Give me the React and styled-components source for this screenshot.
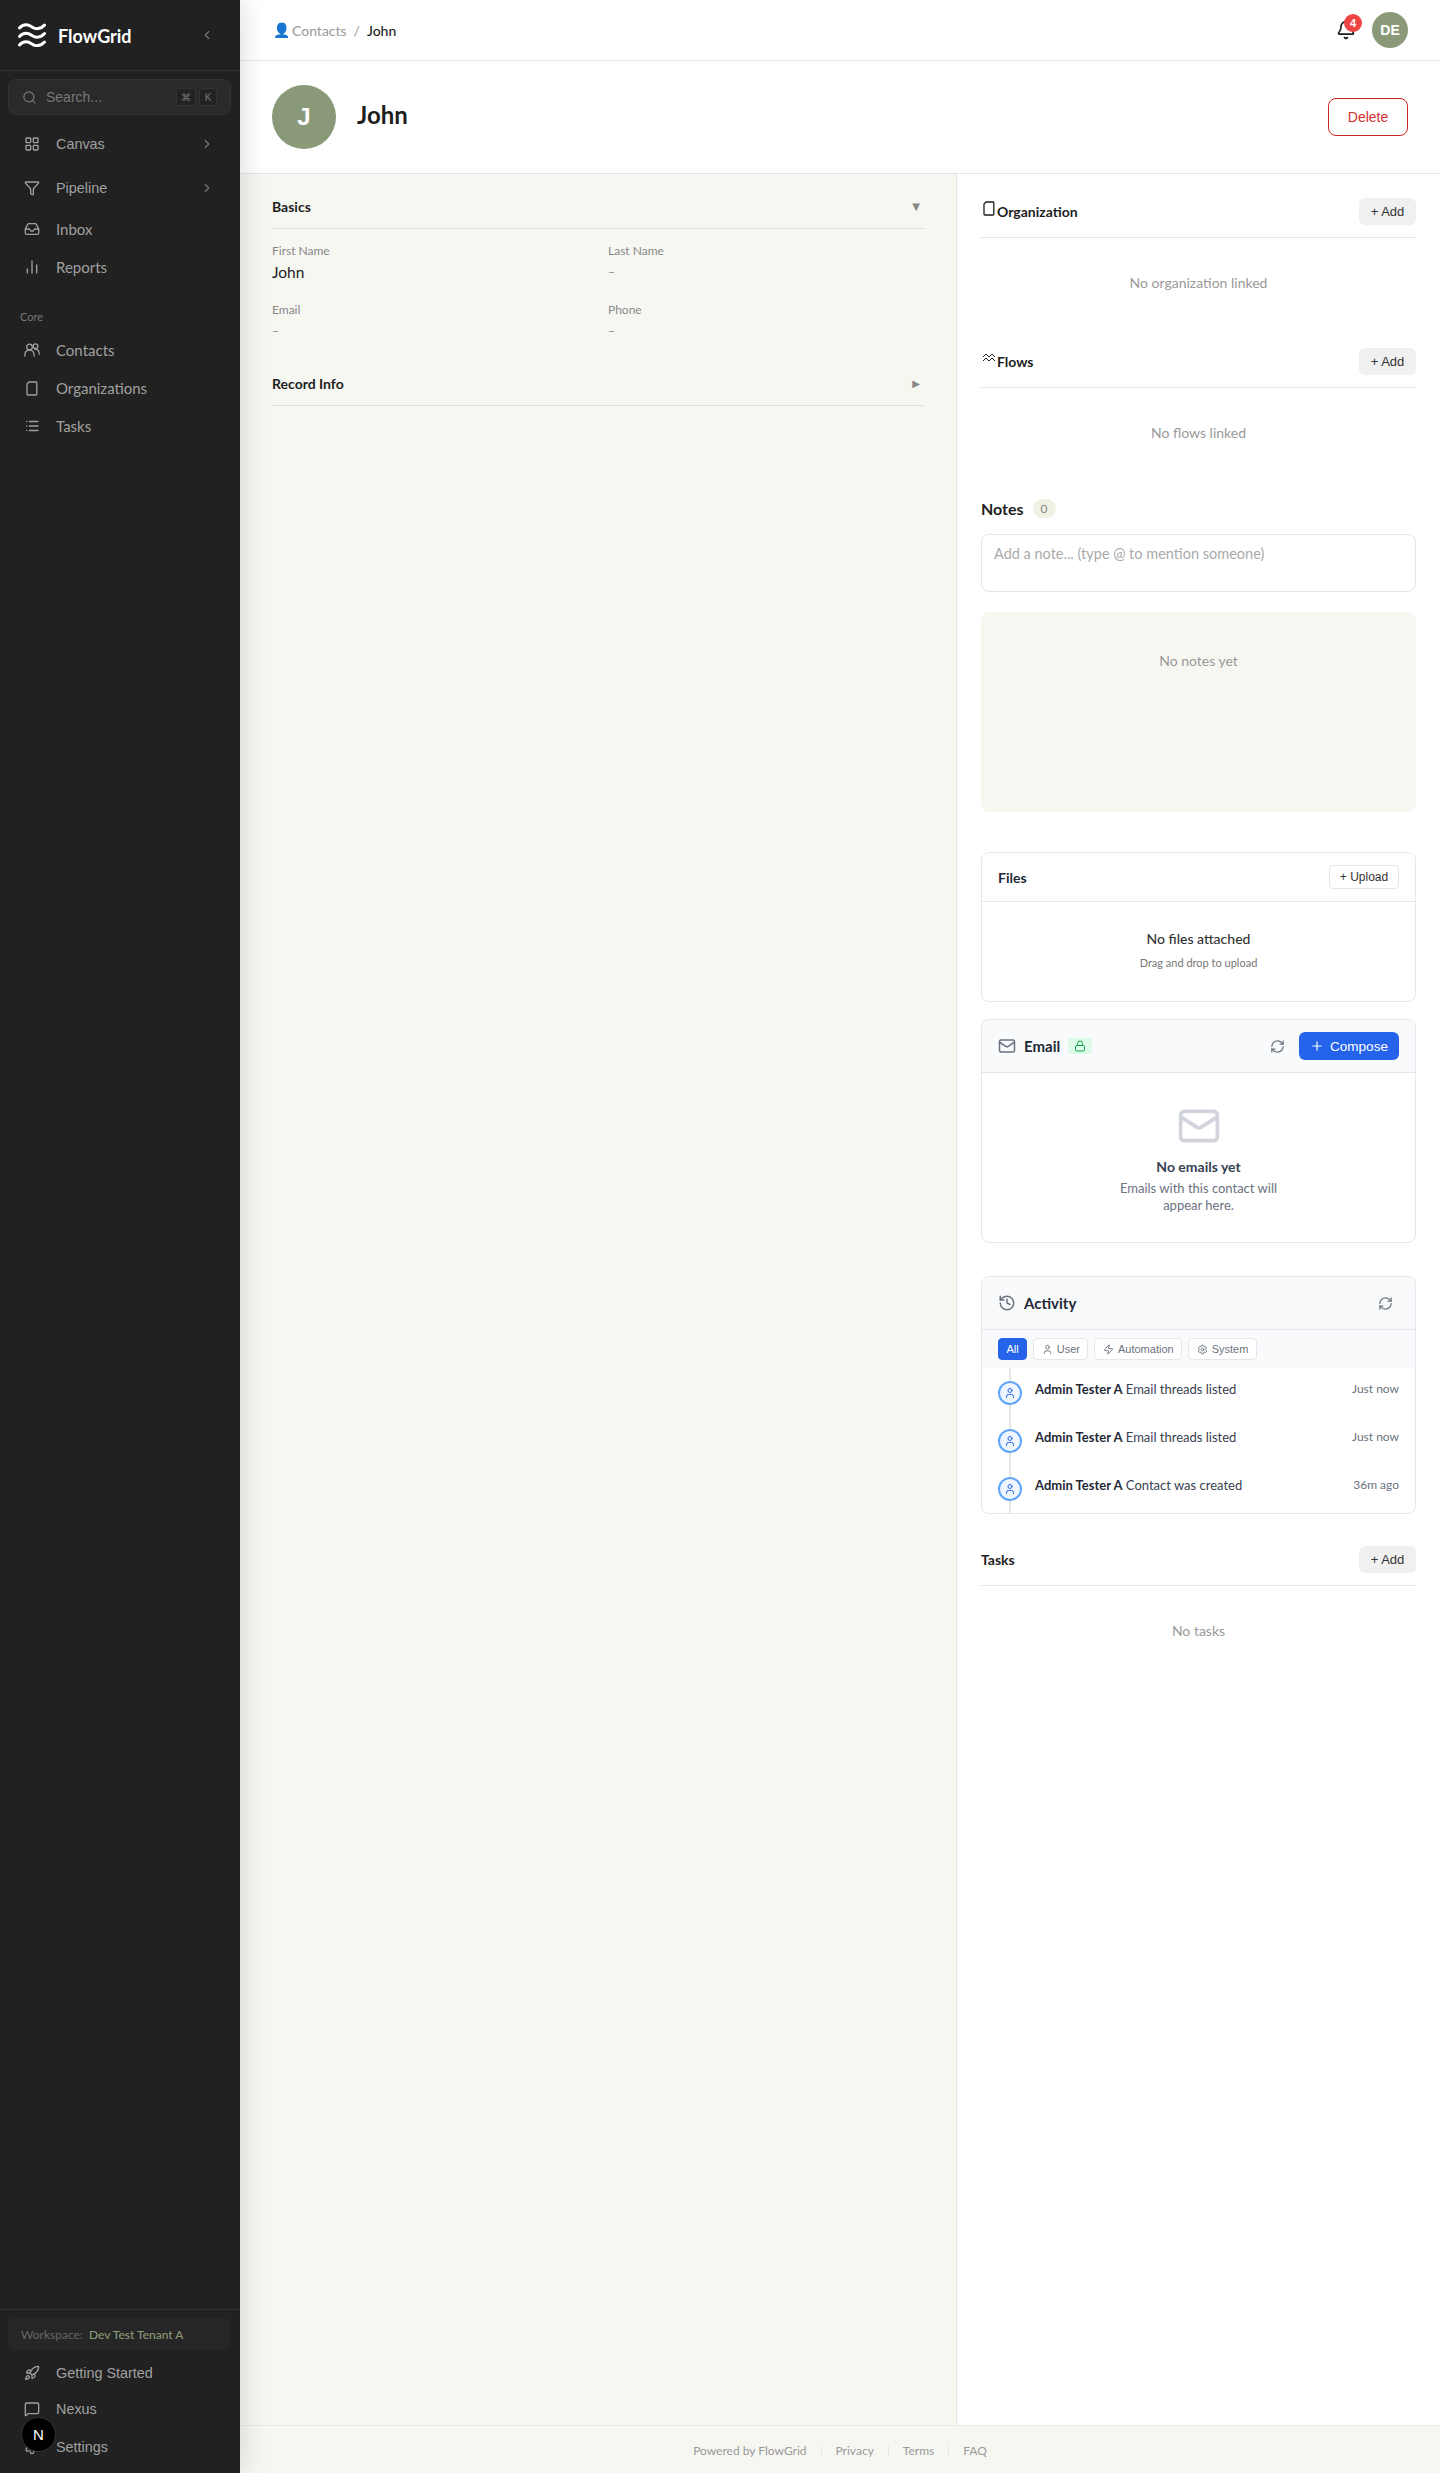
import React from "react";
import styled, { createGlobalStyle } from "styled-components";
import {
  Bell,
  ChartNoAxesColumn,
  ChevronLeft,
  ChevronRight,
  Filter,
  History,
  Inbox,
  LayoutGrid,
  Lock,
  Mail,
  MessageSquare,
  Plus,
  RefreshCw,
  Rocket,
  Search,
  Settings,
  User,
  Zap,
} from "lucide-react";

const FONT = `Lato, "Open Sans", sans-serif`;
const ARIAL = `"Liberation Sans", Arial, sans-serif`;

const GlobalStyle = createGlobalStyle`
  html, body { margin: 0; padding: 0; }
  * { box-sizing: border-box; }
  body { font-family: ${FONT}; background: #f7f7f2; color: #1e1e1e; }
`;

const Shell = styled.div`
  display: flex;
  min-height: 100vh;
`;

/* sidebar */
const Sidebar = styled.aside`
  width: 240px;
  flex-shrink: 0;
  background: #212121;
  display: flex;
  flex-direction: column;
  box-shadow: 4px 0 24px rgba(0, 0, 0, 0.12);
  z-index: 2;
`;

const Brand = styled.div`
  height: 71px;
  padding: 0 26px 0 18px;
  display: flex;
  align-items: center;
  gap: 12px;
  border-bottom: 1px solid #333;
  color: #fff;
`;

const BrandName = styled.span`
  font-size: 18px;
  font-weight: 700;
  flex: 1;
  margin-top: 1px;
`;

const SearchBox = styled.div`
  margin: 8px 9px 0 8px;
  height: 36px;
  border-radius: 8px;
  background: #2a2a2a;
  border: 1px solid #333;
  display: flex;
  align-items: center;
  padding: 0 13px;
  gap: 9px;
  color: #777;
  font: 14px ${ARIAL};
`;

const SearchText = styled.span`
  flex: 1;
`;

const Kbd = styled.span`
  width: ${(p) => p.$w || 20}px;
  height: 18px;
  margin-left: -6px;
  border-radius: 3px;
  background: #222;
  border: 1px solid #333;
  font: 10px ${ARIAL};
  color: #777;
  display: flex;
  align-items: center;
  justify-content: center;
`;

const NavList = styled.nav`
  display: flex;
  flex-direction: column;
  padding-top: ${(p) => p.$top || 0}px;
`;

const NavItem = styled.div`
  height: ${(p) => p.$h || 38}px;
  display: flex;
  align-items: center;
  padding: 0 26px 0 24px;
  gap: 16px;
  color: #a0a0a0;
  font-family: ${(p) => (p.$arial ? ARIAL : FONT)};
  font-size: ${(p) => (p.$arial ? 14.4 : 15)}px;
  svg { flex-shrink: 0; }
`;

const NavLabel = styled.span`
  flex: 1;
`;

const SectionLabel = styled.div`
  margin: 24px 0 7px 20px;
  font-size: 11px;
  line-height: 14px;
  color: #777;
`;

const SideBottom = styled.div`
  margin-top: auto;
  border-top: 1px solid #333;
  padding-bottom: 6px;
`;

const Workspace = styled.div`
  margin: 8px 9px 0 8px;
  height: 32px;
  border-radius: 6px;
  background: #262626;
  padding: 0 13px;
  display: flex;
  align-items: center;
  gap: 6px;
  font-size: 12px;
  color: #666;
`;

const WorkspaceName = styled.span`
  color: #8a9a78;
  font-weight: 500;
`;

const DevBadge = styled.div`
  position: fixed;
  left: 21px;
  bottom: 21px;
  width: 35px;
  height: 35px;
  border-radius: 50%;
  background: #000;
  border: 1px solid #333;
  color: #fff;
  display: flex;
  align-items: center;
  justify-content: center;
  font: 15px ${ARIAL};
  z-index: 5;
`;

/* main */
const Main = styled.div`
  flex: 1;
  min-width: 0;
  display: flex;
  flex-direction: column;
`;

const TopBar = styled.header`
  height: 61px;
  background: #fff;
  border-bottom: 1px solid #e5e5e5;
  display: flex;
  align-items: center;
  padding: 0 32px;
`;

const Crumbs = styled.div`
  flex: 1;
  display: flex;
  align-items: center;
  gap: 7px;
  font-size: 14px;
  color: #999;
`;

const CrumbIcon = styled.span`
  font-family: "DejaVu Sans", sans-serif;
  color: #8ab8e8;
  font-size: 14px;
  margin: 0 -5px 0 1px;
`;

const CrumbCurrent = styled.span`
  color: #1e1e1e;
  font-weight: 500;
`;

const BellWrap = styled.div`
  position: relative;
  width: 20px;
  height: 20px;
  margin-right: 16px;
  color: #1e1e1e;
`;

const BellBadge = styled.span`
  position: absolute;
  top: -6px;
  right: -6px;
  width: 18px;
  height: 18px;
  border-radius: 50%;
  background: #ef4444;
  color: #fff;
  font: 700 11px ${ARIAL};
  display: flex;
  align-items: center;
  justify-content: center;
`;

const Avatar = styled.div`
  width: ${(p) => p.$size}px;
  height: ${(p) => p.$size}px;
  border-radius: 50%;
  background: #8a9a78;
  color: #fff;
  display: flex;
  align-items: center;
  justify-content: center;
  font-family: ${ARIAL};
  font-weight: 700;
  font-size: ${(p) => p.$fs}px;
  flex-shrink: 0;
`;

const ProfileHead = styled.div`
  height: 113px;
  background: #fff;
  border-bottom: 1px solid #e5e5e5;
  display: flex;
  align-items: center;
  padding: 0 32px;
  gap: 21px;
`;

const ProfileName = styled.h1`
  margin: 0 0 6px;
  flex: 1;
  font-size: 24px;
  font-weight: 700;
  color: #1e1e1e;
`;

const DeleteButton = styled.button`
  width: 80px;
  height: 38px;
  background: #fff;
  border: 1px solid #c62828;
  border-radius: 8px;
  color: #d32f2f;
  font: 14px ${ARIAL};
`;

const Body = styled.div`
  flex: 1;
  display: flex;
`;

const LeftCol = styled.section`
  flex: 1;
  min-width: 0;
  padding: 20px 32px 0 32px;
`;

const RightCol = styled.section`
  width: 484px;
  flex-shrink: 0;
  background: #fff;
  border-left: 1px solid #e5e5e5;
  padding: 24px 24px 32px 24px;
`;

const Accordion = styled.div`
  height: 35px;
  display: flex;
  align-items: center;
  justify-content: space-between;
  padding: 0 4px 10px 0;
  border-bottom: 1px solid #e0e0dc;
  font-size: 14px;
  font-weight: 700;
  color: #1e1e1e;
`;

const Caret = styled.span`
  font: 10px "DejaVu Sans", sans-serif;
  color: #888;
`;

const FieldGrid = styled.div`
  display: grid;
  grid-template-columns: 1fr 1fr;
  column-gap: 20px;
  row-gap: 20px;
  padding: 14px 0 30px;
`;

const FieldLabel = styled.div`
  font-size: 12px;
  line-height: 16px;
  color: #888;
`;

const FieldValue = styled.div`
  margin-top: 3px;
  font-size: ${(p) => (p.$empty ? 12 : 15.5)}px;
  line-height: 20px;
  color: ${(p) => (p.$empty ? "#888" : "#1e1e1e")};
`;

const LinkHead = styled.div`
  height: 40px;
  padding-bottom: 12px;
  display: flex;
  align-items: center;
  border-bottom: 1px solid #e5e5e5;
`;

const LinkTitle = styled.div`
  flex: 1;
  display: flex;
  align-items: center;
  font-size: 14px;
  font-weight: 700;
  color: #1e1e1e;
  svg { margin-top: -7px; }
`;

const AddButton = styled.button`
  width: 57px;
  height: 27px;
  border: 0;
  border-radius: 6px;
  background: #f0f0f0;
  font: 13px ${ARIAL};
  color: #333;
`;

const Empty = styled.div`
  height: ${(p) => p.$h}px;
  padding-top: 35px;
  text-align: center;
  font-size: 14px;
  line-height: 20px;
  color: #999;
`;

const NotesHead = styled.div`
  display: flex;
  align-items: center;
  gap: 9px;
  height: 20px;
  margin-bottom: 16px;
  font-size: 16px;
  font-weight: 700;
`;

const Count = styled.span`
  width: 23px;
  height: 19px;
  border-radius: 10px;
  background: #f0f0e4;
  color: #888;
  font-size: 12px;
  font-weight: 400;
  display: flex;
  align-items: center;
  justify-content: center;
`;

const NoteInput = styled.div`
  height: 58px;
  border: 1px solid #e5e5e5;
  border-radius: 8px;
  padding: 10px 12px;
  font-size: 14.5px;
  line-height: 18px;
  color: #aaa;
`;

const NotesEmpty = styled.div`
  height: 200px;
  margin-top: 20px;
  border-radius: 8px;
  background: #f7f7f2;
  padding-top: 39px;
  text-align: center;
  font-size: 14px;
  line-height: 20px;
  color: #999;
`;

const Card = styled.div`
  margin-top: ${(p) => p.$mt}px;
  border: 1px solid #e5e7eb;
  border-radius: 8px;
  overflow: hidden;
  background: #fff;
`;

const CardHead = styled.div`
  height: ${(p) => p.$h}px;
  background: ${(p) => (p.$tinted ? "#f9fafb" : "#fff")};
  border-bottom: 1px solid #e5e7eb;
  display: flex;
  align-items: center;
  padding: 0 16px;
  gap: 8px;
  color: #6b7280;
`;

const CardTitle = styled.span`
  font-size: ${(p) => p.$fs || 15}px;
  font-weight: 700;
  color: #1f2937;
`;

const Spacer = styled.span`
  flex: 1;
`;

const UploadButton = styled.button`
  width: 70px;
  height: 24px;
  background: #fff;
  border: 1px solid #e5e5e5;
  border-radius: 4px;
  font: 12px ${ARIAL};
  color: #333;
`;

const FilesBody = styled.div`
  height: 99px;
  padding-top: 27px;
  text-align: center;
`;

const FilesTitle = styled.div`
  font-size: 14px;
  line-height: 20px;
  font-weight: 500;
  color: #333;
`;

const FilesHint = styled.div`
  margin-top: 7px;
  font-size: 11px;
  line-height: 14px;
  color: #777;
`;

const LockPill = styled.span`
  width: 24px;
  height: 16px;
  border-radius: 3px;
  background: #dcfce7;
  color: #16a34a;
  display: flex;
  align-items: center;
  justify-content: center;
`;

const ComposeButton = styled.button`
  width: 100px;
  height: 28px;
  margin-left: 6px;
  background: #2563eb;
  border: 0;
  border-radius: 6px;
  color: #fff;
  font: 13.5px ${ARIAL};
  display: flex;
  align-items: center;
  justify-content: center;
  gap: 6px;
`;

const EmailBody = styled.div`
  height: 169px;
  padding-top: 31px;
  display: flex;
  flex-direction: column;
  align-items: center;
  color: #d1d5db;
`;

const EmailTitle = styled.div`
  margin-top: 9px;
  font-size: 14px;
  line-height: 20px;
  font-weight: 700;
  color: #374151;
`;

const EmailHint = styled.div`
  width: 180px;
  margin-top: 3px;
  text-align: center;
  font-size: 13px;
  line-height: 16.5px;
  color: #6b7280;
`;

const ActivityRefresh = styled(RefreshCw)`
  margin-right: 6px;
`;

const FilterRow = styled.div`
  height: 38px;
  background: #f9fafb;
  display: flex;
  align-items: center;
  padding: 0 16px;
  gap: 6px;
`;

const Chip = styled.span`
  height: 22px;
  padding: 0 7.5px;
  border-radius: 4px;
  border: 1px solid ${(p) => (p.$active ? "#2563eb" : "#e5e7eb")};
  background: ${(p) => (p.$active ? "#2563eb" : "#fff")};
  color: ${(p) => (p.$active ? "#fff" : "#6b7280")};
  font: 11px ${ARIAL};
  display: inline-flex;
  align-items: center;
  gap: 4px;
`;

const Timeline = styled.div`
  position: relative;
  height: 145px;
  &::before {
    content: "";
    position: absolute;
    left: 27px;
    top: 0;
    bottom: 0;
    width: 2px;
    background: #e5e7eb;
  }
`;

const Event = styled.div`
  position: relative;
  height: 48px;
  padding: 13px 16px 0;
  display: flex;
  gap: 13px;
`;

const EventDot = styled.span`
  width: 24px;
  height: 24px;
  border-radius: 50%;
  background: #eff6ff;
  border: 2px solid #60a5fa;
  color: #2563eb;
  display: flex;
  align-items: center;
  justify-content: center;
  flex-shrink: 0;
`;

const EventText = styled.div`
  flex: 1;
  font-size: 13px;
  line-height: 18px;
  margin-top: -1px;
  color: #374151;
`;

const EventActor = styled.strong`
  font-weight: 700;
  color: #1f2937;
`;

const EventTime = styled.span`
  font-size: 12px;
  line-height: 18px;
  margin-top: -1px;
  color: #6b7280;
`;

const TasksBlock = styled.div`
  margin-top: 32px;
`;

const Footer = styled.footer`
  height: 48px;
  border-top: 1px solid #e8e8e4;
  display: flex;
  align-items: center;
  justify-content: center;
  gap: 14px;
  padding-top: 2px;
  font-size: 12px;
  color: #999;
`;

const FooterSep = styled.span`
  width: 1px;
  height: 10px;
  background: #e5e5e5;
`;

const WAVE = "c4.500-5 9.500-3 12.500-1s8 3 12.500-2";

const LogoMark = () => (
  <svg width="28" height="24" viewBox="0 0 28 24" fill="none" stroke="#fff" strokeWidth="3" strokeLinecap="round">
    <path d={`M1.500 5${WAVE}`} />
    <path d={`M1.500 13.500${WAVE}`} />
    <path d={`M1.500 22${WAVE}`} />
  </svg>
);

const OrgIcon = ({ size = 16 }) => (
  <svg width={size} height={size} viewBox="0 0 16 16" fill="none" stroke="currentColor" strokeWidth="1.300" strokeLinejoin="round">
    <path d="M3 4 5 2h7a.8.8 0 0 1 .8.8v11.400a.8.8 0 0 1-.8.8H3.800a.8.8 0 0 1-.8-.8z" />
  </svg>
);

const WavesIcon = () => (
  <svg width="16" height="12" viewBox="0 0 16 12" fill="none" stroke="currentColor" strokeWidth="1">
    <path d="M2 5 5 2l3 3 3-3 3 3" />
    <path d="M2 9l3-3 3 3 3-3 3 3" />
  </svg>
);

const PeopleIcon = () => (
  <svg width="16" height="16" viewBox="0 0 16 16" fill="none" stroke="currentColor" strokeWidth="1.300" strokeLinecap="round">
    <circle cx="5.500" cy="5" r="2.800" />
    <circle cx="11.500" cy="4.200" r="2.300" />
    <path d="M.8 14c0-4 2-6 4.700-6s4.700 2 4.700 6" />
    <path d="M10.500 7.200c3-.5 4.800 1.600 4.800 5" />
  </svg>
);

const TaskListIcon = () => (
  <svg width="16" height="16" viewBox="0 0 16 16" fill="none" stroke="currentColor" strokeWidth="1.500">
    <path d="M5 3.500h9.500M5 8h9.500M5 12.500h9.500" />
    <path d="M2 3.500h1.500M2 8h1.500M2 12.500h1.500" strokeWidth="1" />
  </svg>
);

const events = [
  { id: 1, text: "Email threads listed", time: "Just now" },
  { id: 2, text: "Email threads listed", time: "Just now" },
  { id: 3, text: "Contact was created", time: "36m ago" },
];

const App = () => (
  <>
    <GlobalStyle />
    <Shell>
      <Sidebar>
        <Brand>
          <LogoMark />
          <BrandName>FlowGrid</BrandName>
          <ChevronLeft size={14} color="#777" />
        </Brand>
        <SearchBox>
          <Search size={15} />
          <SearchText>Search...</SearchText>
          <Kbd>⌘</Kbd>
          <Kbd $w={18}>K</Kbd>
        </SearchBox>
        <NavList $top={7}>
          <NavItem $h={44} $arial>
            <LayoutGrid size={16} />
            <NavLabel>Canvas</NavLabel>
            <ChevronRight size={14} color="#777" />
          </NavItem>
          <NavItem $h={44} $arial>
            <Filter size={16} />
            <NavLabel>Pipeline</NavLabel>
            <ChevronRight size={14} color="#777" />
          </NavItem>
          <NavItem>
            <Inbox size={16} />
            <NavLabel>Inbox</NavLabel>
          </NavItem>
          <NavItem>
            <ChartNoAxesColumn size={16} />
            <NavLabel>Reports</NavLabel>
          </NavItem>
        </NavList>
        <SectionLabel>Core</SectionLabel>
        <NavList>
          <NavItem>
            <PeopleIcon />
            <NavLabel>Contacts</NavLabel>
          </NavItem>
          <NavItem>
            <OrgIcon />
            <NavLabel>Organizations</NavLabel>
          </NavItem>
          <NavItem>
            <TaskListIcon />
            <NavLabel>Tasks</NavLabel>
          </NavItem>
        </NavList>
        <SideBottom>
          <Workspace>
            Workspace:
            <WorkspaceName>Dev Test Tenant A</WorkspaceName>
          </Workspace>
          <NavList $top={5}>
            <NavItem $h={36} $arial>
              <Rocket size={16} />
              <NavLabel>Getting Started</NavLabel>
            </NavItem>
            <NavItem $h={36} $arial>
              <MessageSquare size={16} />
              <NavLabel>Nexus</NavLabel>
            </NavItem>
            <NavItem $h={40} $arial>
              <Settings size={16} />
              <NavLabel>Settings</NavLabel>
            </NavItem>
          </NavList>
        </SideBottom>
      </Sidebar>

      <Main>
        <TopBar>
          <Crumbs>
            <CrumbIcon>👤</CrumbIcon>
            <span>Contacts</span>
            <span>/</span>
            <CrumbCurrent>John</CrumbCurrent>
          </Crumbs>
          <BellWrap>
            <Bell size={20} />
            <BellBadge>4</BellBadge>
          </BellWrap>
          <Avatar $size={36} $fs={14}>DE</Avatar>
        </TopBar>
        <ProfileHead>
          <Avatar $size={64} $fs={24}>J</Avatar>
          <ProfileName>John</ProfileName>
          <DeleteButton>Delete</DeleteButton>
        </ProfileHead>
        <Body>
          <LeftCol>
            <Accordion>
              Basics
              <Caret>▼</Caret>
            </Accordion>
            <FieldGrid>
              <div>
                <FieldLabel>First Name</FieldLabel>
                <FieldValue>John</FieldValue>
              </div>
              <div>
                <FieldLabel>Last Name</FieldLabel>
                <FieldValue $empty>–</FieldValue>
              </div>
              <div>
                <FieldLabel>Email</FieldLabel>
                <FieldValue $empty>–</FieldValue>
              </div>
              <div>
                <FieldLabel>Phone</FieldLabel>
                <FieldValue $empty>–</FieldValue>
              </div>
            </FieldGrid>
            <Accordion>
              Record Info
              <Caret>▶</Caret>
            </Accordion>
          </LeftCol>

          <RightCol>
            <LinkHead>
              <LinkTitle>
                <OrgIcon />
                Organization
              </LinkTitle>
              <AddButton>+ Add</AddButton>
            </LinkHead>
            <Empty $h={110}>No organization linked</Empty>
            <LinkHead>
              <LinkTitle>
                <WavesIcon />
                Flows
              </LinkTitle>
              <AddButton>+ Add</AddButton>
            </LinkHead>
            <Empty $h={110}>No flows linked</Empty>

            <NotesHead>
              Notes
              <Count>0</Count>
            </NotesHead>
            <NoteInput>Add a note... (type @ to mention someone)</NoteInput>
            <NotesEmpty>No notes yet</NotesEmpty>

            <Card $mt={40}>
              <CardHead $h={49}>
                <CardTitle $fs={14}>Files</CardTitle>
                <Spacer />
                <UploadButton>+ Upload</UploadButton>
              </CardHead>
              <FilesBody>
                <FilesTitle>No files attached</FilesTitle>
                <FilesHint>Drag and drop to upload</FilesHint>
              </FilesBody>
            </Card>

            <Card $mt={17}>
              <CardHead $h={53} $tinted>
                <Mail size={18} />
                <CardTitle>Email</CardTitle>
                <LockPill><Lock size={12} /></LockPill>
                <Spacer />
                <RefreshCw size={15} />
                <ComposeButton><Plus size={14} />Compose</ComposeButton>
              </CardHead>
              <EmailBody>
                <Mail size={44} />
                <EmailTitle>No emails yet</EmailTitle>
                <EmailHint>Emails with this contact will appear here.</EmailHint>
              </EmailBody>
            </Card>

            <Card $mt={33}>
              <CardHead $h={53} $tinted>
                <History size={18} />
                <CardTitle>Activity</CardTitle>
                <Spacer />
                <ActivityRefresh size={15} />
              </CardHead>
              <FilterRow>
                <Chip $active>All</Chip>
                <Chip><User size={11} />User</Chip>
                <Chip><Zap size={11} />Automation</Chip>
                <Chip><Settings size={11} />System</Chip>
              </FilterRow>
              <Timeline>
                {events.map((ev) => (
                  <Event key={ev.id}>
                    <EventDot><User size={12} /></EventDot>
                    <EventText>
                      <EventActor>Admin Tester A</EventActor> {ev.text}
                    </EventText>
                    <EventTime>{ev.time}</EventTime>
                  </Event>
                ))}
              </Timeline>
            </Card>

            <TasksBlock>
              <LinkHead>
                <LinkTitle>Tasks</LinkTitle>
                <AddButton>+ Add</AddButton>
              </LinkHead>
              <Empty $h={80}>No tasks</Empty>
            </TasksBlock>
          </RightCol>
        </Body>
        <Footer>
          <span>Powered by FlowGrid</span>
          <FooterSep />
          <span>Privacy</span>
          <FooterSep />
          <span>Terms</span>
          <FooterSep />
          <span>FAQ</span>
        </Footer>
      </Main>
    </Shell>
    <DevBadge>N</DevBadge>
  </>
);

export default App;
